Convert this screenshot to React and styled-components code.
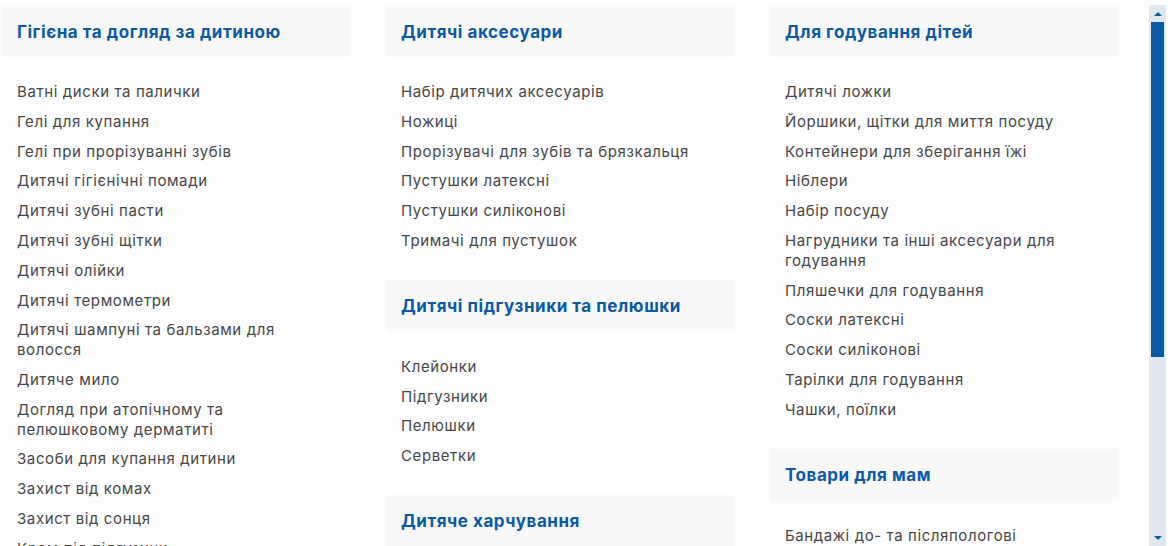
import React from "react";
import styled, { createGlobalStyle } from "styled-components";

const columns = [
  [
    {
      title: "Гігієна та догляд за дитиною",
      items: [
        "Ватні диски та палички",
        "Гелі для купання",
        "Гелі при прорізуванні зубів",
        "Дитячі гігієнічні помади",
        "Дитячі зубні пасти",
        "Дитячі зубні щітки",
        "Дитячі олійки",
        "Дитячі термометри",
        "Дитячі шампуні та бальзами для волосся",
        "Дитяче мило",
        "Догляд при атопічному та пелюшковому дерматиті",
        "Засоби для купання дитини",
        "Захист від комах",
        "Захист від сонця",
        "Крем під підгузник",
        "Присипки",
      ],
    },
  ],
  [
    {
      title: "Дитячі аксесуари",
      items: [
        "Набір дитячих аксесуарів",
        "Ножиці",
        "Прорізувачі для зубів та брязкальця",
        "Пустушки латексні",
        "Пустушки силіконові",
        "Тримачі для пустушок",
      ],
    },
    {
      title: "Дитячі підгузники та пелюшки",
      items: ["Клейонки", "Підгузники", "Пелюшки", "Серветки"],
    },
    {
      title: "Дитяче харчування",
      items: ["Дитячі каші", "Дитячі суміші"],
    },
  ],
  [
    {
      title: "Для годування дітей",
      items: [
        "Дитячі ложки",
        "Йоршики, щітки для миття посуду",
        "Контейнери для зберігання їжі",
        "Ніблери",
        "Набір посуду",
        "Нагрудники та інші аксесуари для годування",
        "Пляшечки для годування",
        "Соски латексні",
        "Соски силіконові",
        "Тарілки для годування",
        "Чашки, поїлки",
      ],
    },
    {
      title: "Товари для мам",
      items: ["Бандажі до- та післяпологові", "Бюстгальтери для годування"],
    },
  ],
];

const App = () => {
  return (
    <>
      <GlobalStyle />
      <Frame>
        <Content>
          <Grid>
            {columns.map((groups, i) => (
              <Column key={i}>
                {groups.map((group) => (
                  <Group key={group.title}>
                    <GroupTitle>{group.title}</GroupTitle>
                    <List>
                      {group.items.map((item) => (
                        <Item key={item}>
                          <ItemLink href="#">{item}</ItemLink>
                        </Item>
                      ))}
                    </List>
                  </Group>
                ))}
              </Column>
            ))}
          </Grid>
        </Content>
        <Scrollbar>
          <ScrollButton>
            <svg width="8" height="4" viewBox="0 0 8 4">
              <path d="M0 4 L4 0 L8 4 Z" fill="#0a5aa5" />
            </svg>
          </ScrollButton>
          <Thumb />
          <Track />
          <ScrollButton>
            <svg width="8" height="4" viewBox="0 0 8 4">
              <path d="M0 0 L8 0 L4 4 Z" fill="#0a5aa5" />
            </svg>
          </ScrollButton>
        </Scrollbar>
      </Frame>
    </>
  );
};

export default App;

const GlobalStyle = createGlobalStyle`
  html, body {
    margin: 0;
    padding: 0;
    background: #fdfdfd;
    overflow: hidden;
  }
  body {
    font-family: Inter, "Noto Sans", sans-serif;
  }
`;

const Frame = styled.div`
  display: flex;
  height: 546px;
  padding: 5px 4px 0 2px;
  box-sizing: border-box;
`;

const Content = styled.div`
  flex: 1;
  overflow: hidden;
`;

const Grid = styled.div`
  display: grid;
  grid-template-columns: repeat(3, 349px);
  column-gap: 35px;
`;

const Column = styled.div`
  display: flex;
  flex-direction: column;
`;

const Group = styled.div`
  display: flex;
  flex-direction: column;
`;

const GroupTitle = styled.div`
  height: 52px;
  display: flex;
  align-items: center;
  padding: 1px 15px 0;
  box-sizing: border-box;
  background: #f8f8f8;
  color: #0a5aa5;
  font-size: 17px;
  font-weight: 700;
  letter-spacing: 0.55px;
`;

const List = styled.ul`
  list-style: none;
  margin: 0;
  padding: 25px 15px 19px;
`;

const Item = styled.li`
  margin-bottom: 10px;
  line-height: 19.8px;
  font-size: 15px;
  letter-spacing: 0.6px;
`;

const ItemLink = styled.a`
  color: #474747;
  text-decoration: none;
`;

const Scrollbar = styled.div`
  width: 17px;
  margin-left: 30px;
  background: #dfe8f1;
  display: flex;
  flex-direction: column;
  align-items: center;
`;

const ScrollButton = styled.div`
  height: 17px;
  width: 100%;
  display: flex;
  align-items: center;
  justify-content: center;
  flex-shrink: 0;
`;

const Thumb = styled.div`
  width: 13px;
  height: 335px;
  background: #0a5aa5;
  flex-shrink: 0;
`;

const Track = styled.div`
  flex: 1;
`;
